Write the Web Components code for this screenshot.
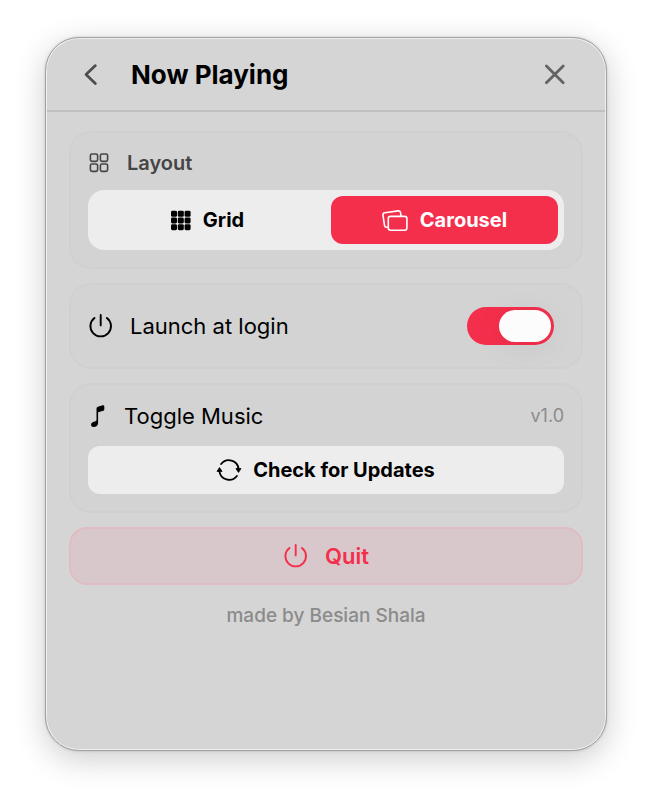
<!DOCTYPE html>
<html lang="en">
<head>
  <meta charset="utf-8">
  <meta name="viewport" content="width=device-width, initial-scale=1">
  <title>Now Playing</title>
  <style>
    body {
      margin: 0;
      padding: 37px 45px 53px;
      background: #fff;
      color: #000;
      font-family: Inter, "Liberation Sans", sans-serif;
      font-size: 20px;
      line-height: 28px;
    }
  </style>
</head>
<body>
  <settings-panel heading="Now Playing">
    <settings-card>
      <settings-row muted>
        <app-icon slot="icon" name="squares"></app-icon>
        Layout
      </settings-row>
      <segmented-control label="Layout">
        <app-icon slot="first" name="grid"></app-icon>
        <span slot="first">Grid</span>
        <app-icon slot="second" name="carousel"></app-icon>
        <span slot="second">Carousel</span>
      </segmented-control>
    </settings-card>

    <settings-card>
      <toggle-row checked>
        <app-icon slot="icon" name="power"></app-icon>
        Launch at login
      </toggle-row>
    </settings-card>

    <settings-card>
      <settings-row>
        <app-icon slot="icon" name="note"></app-icon>
        Toggle Music
        <span slot="end">v1.0</span>
      </settings-row>
      <action-button>
        <app-icon slot="icon" name="refresh"></app-icon>
        Check for Updates
      </action-button>
    </settings-card>

    <action-button kind="danger">
      <app-icon slot="icon" name="power"></app-icon>
      Quit
    </action-button>

    <span slot="footer">made by Besian Shala</span>
  </settings-panel>

  <script>
    const createTemplate = (innerHTML) =>
      Object.assign(document.createElement('template'), { innerHTML });

    // name: [width, height, markup]
    const icons = {
      back: [14, 22, `
        <path d="M11.4 1.6 2 10.6 11.4 19.6" fill="none" stroke="currentColor" stroke-width="2.7" stroke-linecap="round" stroke-linejoin="round"/>`],
      close: [20, 20, `
        <path d="M1.4 1 18.2 17.8M18.2 1 1.4 17.8" fill="none" stroke="currentColor" stroke-width="2.8" stroke-linecap="round"/>`],
      squares: [20, 20, `
        <g fill="none" stroke="currentColor" stroke-width="1.6">
          <rect x="2.4" y="1" width="7.2" height="7.4" rx="1.6"/>
          <rect x="12.4" y="1" width="7.2" height="7.4" rx="1.6"/>
          <rect x="2.4" y="11" width="7.2" height="7.4" rx="1.6"/>
          <rect x="12.4" y="11" width="7.2" height="7.4" rx="1.6"/>
        </g>`],
      grid: [20, 20, `
        <g fill="currentColor">
          <rect x="0" y="0.8" width="6" height="6" rx="1.4"/>
          <rect x="6.8" y="0.8" width="6" height="6" rx="1.4"/>
          <rect x="13.6" y="0.8" width="6" height="6" rx="1.4"/>
          <rect x="0" y="7.5" width="6" height="6" rx="1.4"/>
          <rect x="6.8" y="7.5" width="6" height="6" rx="1.4"/>
          <rect x="13.6" y="7.5" width="6" height="6" rx="1.4"/>
          <rect x="0" y="14.2" width="6" height="6" rx="1.4"/>
          <rect x="6.8" y="14.2" width="6" height="6" rx="1.4"/>
          <rect x="13.6" y="14.2" width="6" height="6" rx="1.4"/>
        </g>`],
      carousel: [26, 22, `
        <g fill="none" stroke="currentColor" stroke-width="1.6" stroke-linecap="round" stroke-linejoin="round">
          <rect x="6.3" y="7.4" width="18.6" height="13.8" rx="2.2"/>
          <path d="M19 7.2 18.6 3.8Q18.3 1.6 16.1 1.9L2.9 3.8Q.7 4.1 1 6.3L2.5 16.4Q2.8 18.5 5 18.3L6 18.2"/>
        </g>`],
      power: [24, 24, `
        <path d="M12.7 1V11.4M6.5 3.9A10.3 10.3 0 1 0 18.9 3.9" fill="none" stroke="currentColor" stroke-width="1.9" stroke-linecap="round"/>`],
      note: [18, 24, `
        <path d="M8.5 4.5Q8.5 3.1 9.8 2.7L14.8 1.3Q16.3 1 16.3 2.4V5.6Q16.3 6.5 15.3 6.8L10.1 8.3V18.8Q10.1 21.8 7.2 22.8 3.3 23.8 3 20.9 3 18.4 5.9 17.7L7.5 17.3Q8.5 17 8.5 16Z" fill="currentColor"/>`],
      refresh: [24, 22, `
        <path d="M4.1 5A9.8 9.8 0 0 1 21.6 10M19.9 17A9.8 9.8 0 0 1 2.4 12" fill="none" stroke="currentColor" stroke-width="1.9" stroke-linecap="round"/>
        <path d="M18.9 9.6H24L21.5 13.4ZM0 12.4H5.1L2.5 8.6Z" fill="currentColor" stroke="currentColor" stroke-width=".8" stroke-linejoin="round"/>`],
    };

    class AppIcon extends HTMLElement {
      constructor() {
        super();
        this.attachShadow({ mode: 'open' });
      }

      connectedCallback() {
        const [width, height, markup] = icons[this.getAttribute('name')];

        this.shadowRoot.innerHTML = `
          <style>
            :host { display: block; flex: none; }
            svg { display: block; overflow: visible; }
          </style>
          <svg width="${width}" height="${height}" viewBox="0 0 ${width} ${height}" aria-hidden="true">${markup}</svg>
        `;
      }
    }

    window.customElements.define('app-icon', AppIcon);

    const panelTemplate = createTemplate(`
      <style>
        :host {
          display: flex;
          flex-direction: column;
          box-sizing: border-box;
          min-height: calc(100vh - 90px);
          border: 1px solid #a2a2a2;
          border-radius: 34px;
          background: #d5d5d5;
          box-shadow:
            inset 0 0 0 1px #efefef,
            0 0 3px rgba(0, 0, 0, 0.16),
            0 8px 32px rgba(0, 0, 0, 0.2);
        }

        header {
          display: flex;
          align-items: center;
          gap: 24px;
          margin: 0 1px;
          padding: 20px 34px 18px 28px;
          border-bottom: 2px solid #c0c0c0;
        }

        h1 {
          flex: 1;
          margin: 0;
          font-size: 26px;
          font-weight: 700;
          line-height: 34px;
        }

        button {
          display: grid;
          place-items: center;
          width: 32px;
          height: 32px;
          padding: 0;
          border: 0;
          background: none;
          color: #4d4d4d;
          cursor: pointer;
        }

        .close {
          color: #636363;
        }

        main {
          display: flex;
          flex-direction: column;
          gap: 14px;
          padding: 19px 23px;
        }

        footer {
          color: #8b8b8b;
          font-size: 19px;
          font-weight: 500;
          text-align: center;
          padding-top: 3px;
        }
      </style>
      <header>
        <button type="button" aria-label="Back"><app-icon name="back"></app-icon></button>
        <h1></h1>
        <button class="close" type="button" aria-label="Close"><app-icon name="close"></app-icon></button>
      </header>
      <main>
        <slot></slot>
        <footer><slot name="footer"></slot></footer>
      </main>
    `);

    class SettingsPanel extends HTMLElement {
      constructor() {
        super();
        this.attachShadow({ mode: 'open' });
        this.shadowRoot.appendChild(panelTemplate.content.cloneNode(true));
      }

      connectedCallback() {
        this.shadowRoot.querySelector('h1').textContent = this.getAttribute('heading');
      }
    }

    window.customElements.define('settings-panel', SettingsPanel);

    const cardTemplate = createTemplate(`
      <style>
        :host {
          display: flex;
          flex-direction: column;
          gap: 16px;
          padding: 17px;
          border: 2px solid #d0d0d0;
          border-radius: 22px;
          background: #d3d3d3;
        }
      </style>
      <slot></slot>
    `);

    class SettingsCard extends HTMLElement {
      constructor() {
        super();
        this.attachShadow({ mode: 'open' });
        this.shadowRoot.appendChild(cardTemplate.content.cloneNode(true));
      }
    }

    window.customElements.define('settings-card', SettingsCard);

    const rowTemplate = createTemplate(`
      <style>
        :host {
          display: flex;
          align-items: center;
          gap: 18px;
          font-size: 22px;
        }

        :host([muted]) {
          gap: 19px;
          padding-top: 2px;
          color: #454545;
          font-size: 20px;
          font-weight: 600;
          line-height: 22px;
        }

        .label {
          flex: 1;
        }

        .end {
          color: #8b8b8b;
          font-size: 18px;
        }
      </style>
      <slot name="icon"></slot>
      <span class="label"><slot></slot></span>
      <span class="end"><slot name="end"></slot></span>
    `);

    class SettingsRow extends HTMLElement {
      constructor() {
        super();
        this.attachShadow({ mode: 'open' });
        this.shadowRoot.appendChild(rowTemplate.content.cloneNode(true));
      }
    }

    window.customElements.define('settings-row', SettingsRow);

    const segmentedTemplate = createTemplate(`
      <style>
        :host {
          display: block;
        }

        .track {
          display: grid;
          grid-template-columns: 1fr 1fr;
          gap: 10px;
          padding: 6px;
          border-radius: 16px;
          background: #ededed;
        }

        label {
          display: flex;
          align-items: center;
          justify-content: center;
          gap: 12px;
          height: 48px;
          border-radius: 12px;
          font-weight: 700;
          cursor: pointer;
        }

        label:has(:checked) {
          background: #f32f4c;
          color: #fff;
        }

        label:has(:focus-visible) {
          outline: 2px solid #000;
        }

        input {
          appearance: none;
          width: 0;
          height: 0;
          margin: 0 -12px 0 0;
        }
      </style>
      <div class="track" role="radiogroup">
        <label><input type="radio" name="option"><slot name="first"></slot></label>
        <label><input type="radio" name="option" checked><slot name="second"></slot></label>
      </div>
    `);

    class SegmentedControl extends HTMLElement {
      constructor() {
        super();
        this.attachShadow({ mode: 'open' });
        this.shadowRoot.appendChild(segmentedTemplate.content.cloneNode(true));
      }

      connectedCallback() {
        this.shadowRoot.querySelector('.track').setAttribute('aria-label', this.getAttribute('label'));
      }
    }

    window.customElements.define('segmented-control', SegmentedControl);

    const toggleTemplate = createTemplate(`
      <style>
        :host {
          display: block;
          font-size: 22px;
        }

        label {
          display: flex;
          align-items: center;
          gap: 18px;
          padding: 5px 10px 5px 0;
          cursor: pointer;
        }

        .text {
          flex: 1;
        }

        input {
          appearance: none;
          display: flex;
          box-sizing: border-box;
          width: 87px;
          height: 38px;
          margin: 0;
          padding: 3px;
          border-radius: 19px;
          background: #a8a8a8;
          cursor: pointer;
        }

        input::before {
          content: '';
          width: 52px;
          border-radius: 16px;
          background: #fcfcfc;
          box-shadow: 0 4px 32px rgba(0, 0, 0, 0.06);
        }

        input:checked {
          justify-content: flex-end;
          background: #f32f4c;
        }
      </style>
      <label>
        <slot name="icon"></slot>
        <span class="text"><slot></slot></span>
        <input type="checkbox" role="switch">
      </label>
    `);

    class ToggleRow extends HTMLElement {
      constructor() {
        super();
        this.attachShadow({ mode: 'open' });
        this.shadowRoot.appendChild(toggleTemplate.content.cloneNode(true));
      }

      connectedCallback() {
        this.shadowRoot.querySelector('input').checked = this.hasAttribute('checked');
      }
    }

    window.customElements.define('toggle-row', ToggleRow);

    const buttonTemplate = createTemplate(`
      <style>
        :host {
          display: block;
        }

        button {
          display: flex;
          align-items: center;
          justify-content: center;
          gap: 12px;
          box-sizing: border-box;
          width: 100%;
          height: 48px;
          padding: 0;
          border: 0;
          border-radius: 12px;
          background: #ededed;
          color: inherit;
          font: inherit;
          font-weight: 700;
          cursor: pointer;
        }

        :host([kind="danger"]) button {
          gap: 18px;
          height: 58px;
          border: 2px solid #dfbdc3;
          border-radius: 18px;
          background: #d9c8cb;
          color: #f32f4c;
          font-size: 22px;
          font-weight: 600;
        }
      </style>
      <button type="button">
        <slot name="icon"></slot>
        <span><slot></slot></span>
      </button>
    `);

    class ActionButton extends HTMLElement {
      constructor() {
        super();
        this.attachShadow({ mode: 'open' });
        this.shadowRoot.appendChild(buttonTemplate.content.cloneNode(true));
      }
    }

    window.customElements.define('action-button', ActionButton);
  </script>
</body>
</html>
